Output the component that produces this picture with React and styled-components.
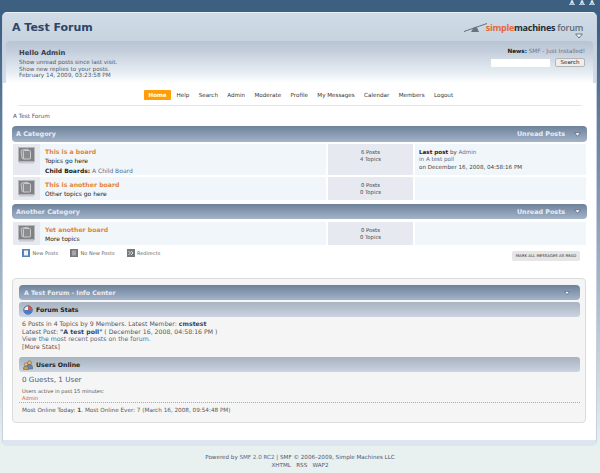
import React from "react";
import styled, { createGlobalStyle } from "styled-components";

const GlobalStyle = createGlobalStyle`
  html, body {
    margin: 0;
    padding: 0;
  }
  body {
    background: #e8f0f0;
    font-family: "DejaVu Sans", Verdana, sans-serif;
    color: #333;
  }
`;

const Page = styled.div`
  width: 600px;
  height: 473px;
  overflow: hidden;
  background: linear-gradient(#3d5f80 0, #3d5f80 30px, #e9f0f0 446px, #e9f0f0 100%);
`;

const TopBar = styled.div`
  height: 12px;
  display: flex;
  justify-content: flex-end;
  gap: 4px;
  padding-right: 5px;
`;

const SizeLetter = styled.span`
  width: 6px;
  text-align: center;
  font-size: 5px;
  line-height: 4px;
  height: 4px;
  font-weight: bold;
  color: #fff;
  border-bottom: 1px solid #b4c8dc;
`;

const Wrapper = styled.div`
  margin: 0 3px 0 2px;
  width: 595px;
  height: 434px;
  box-sizing: border-box;
  background: #fff;
  border-radius: 5px;
  border: 1px solid #c6d0e0;
  border-top-color: #e8eff6;
  border-bottom: 6px solid #dde5f1;
  display: flex;
  flex-direction: column;
`;

const Header = styled.div`
  background: linear-gradient(#cfdbe6 0%, #c6d2de 45%, #d3deec 100%);
  border-radius: 4px 4px 0 0;
  height: 70px;
  flex: none;
  padding-left: 3px;
  padding-right: 3px;
  display: flex;
  flex-direction: column;
`;

const TitleRow = styled.div`
  height: 28px;
  flex: none;
  display: flex;
  align-items: center;
  justify-content: space-between;
  padding: 0 10px 0 6px;
`;

const ForumName = styled.h1`
  margin: 0;
  font-size: 11px;
  font-weight: bold;
  color: #2e4468;
`;

const LogoBox = styled.div`
  display: flex;
  flex-direction: column;
  align-items: flex-end;
  margin-top: 6px;
`;

const Logo = styled.div`
  display: flex;
  align-items: center;
  height: 11px;
  font-family: "Open Sans", sans-serif;
  font-size: 9px;
  font-weight: 700;
  letter-spacing: -0.25px;
  color: #232b38;
  em {
    font-style: normal;
    color: #e5673a;
  }
  b {
    font-weight: 600;
    color: #5f6975;
    margin-left: 2px;
  }
`;

const UserPanel = styled.div`
  flex: 1;
  background: linear-gradient(#b8c3d3 0%, #c5cfdc 25%, #e4ebf2 72%, #fff 100%);
  border-radius: 4px 4px 0 0;
  display: flex;
  justify-content: space-between;
  padding: 7px 8px 0 13px;
`;

const Hello = styled.div`
  font-size: 5.7px;
  line-height: 6.5px;
  color: #4f5a70;
  h2 {
    margin: 0 0 1px;
    font-size: 6.8px;
    line-height: 10px;
    color: #3a4050;
  }
`;

const NewsBox = styled.div`
  display: flex;
  flex-direction: column;
  align-items: flex-end;
  font-size: 5.7px;
  color: #6a7488;
  b {
    color: #222;
  }
`;

const SearchRow = styled.div`
  display: flex;
  gap: 5px;
  margin-top: 4px;
`;

const SearchInput = styled.div`
  width: 59px;
  height: 8px;
  margin-top: 1px;
  background: #fff;
`;

const SearchButton = styled.div`
  width: 28px;
  height: 7px;
  line-height: 7px;
  text-align: center;
  font-size: 5.5px;
  color: #222;
  background: #eee;
  border: 1px solid #b5b5b5;
  border-radius: 2px;
`;

const Menu = styled.nav`
  height: 20px;
  flex: none;
  margin: 0 14px 0 15px;
  padding-top: 2px;
  border-bottom: 1px solid #e6e6e6;
  display: flex;
  align-items: center;
  padding-left: 126px;
  gap: 9.4px;
  font-size: 5.6px;
  color: #333;
`;

const MenuItem = styled.span`
  ${(p) =>
    p.$active &&
    `
    background: #ff9d0a;
    color: #fff;
    font-weight: bold;
    padding: 2px 4.5px;
    border-radius: 1px;
    margin-right: -4px;
  `}
`;

const Crumb = styled.div`
  font-size: 5.7px;
  color: #4a5670;
  padding: 7px 0 0 10px;
  height: 15px;
  flex: none;
  box-sizing: border-box;
`;

const Content = styled.div`
  padding: 5px 9px 0 9px;
`;

const CatBar = styled.div`
  height: ${(p) => p.$h || 16}px;
  margin-top: ${(p) => p.$mt || 0}px;
  background: linear-gradient(#6d8299 0%, #8598b0 45%, #a3b4c9 100%);
  border-radius: 4px;
  display: flex;
  align-items: center;
  justify-content: space-between;
  padding: 0 6px 0 4px;
  font-size: 6.4px;
  font-weight: bold;
  color: #e9eef4;
`;

const Right = styled.div`
  display: flex;
  align-items: center;
  gap: 9px;
`;

const Row = styled.div`
  display: grid;
  grid-template-columns: 27px 286px 2px 85px 2px 171px;
  margin: ${(p) => p.$mt}px 1px 0;
  height: ${(p) => p.$h}px;
`;

const IconCell = styled.div`
  background: #e6e9ef;
  display: flex;
  align-items: flex-start;
  justify-content: center;
  padding-top: 3px;
`;

const InfoCell = styled.div`
  background: #f0f6f9;
  padding: 3px 0 0 5px;
  font-size: 6px;
  line-height: 9.3px;
  color: #222;
`;

const BoardName = styled.div`
  font-size: 6.2px;
  font-weight: bold;
  color: #e3833b;
`;

const Link = styled.span`
  color: #5a6c8a;
`;

const Gap = styled.div`
  background: #fff;
`;

const StatsCell = styled.div`
  background: #e6e9ef;
  font-size: 5.3px;
  line-height: 7.5px;
  color: #444;
  text-align: center;
  padding-top: 4.5px;
`;

const LastCell = styled.div`
  background: #f0f6f9;
  font-size: 5.6px;
  line-height: 7.5px;
  color: #444;
  padding: 4.5px 0 0 4px;
  b {
    color: #222;
  }
`;

const LegendRow = styled.div`
  display: flex;
  justify-content: space-between;
  align-items: flex-start;
  height: 14px;
  margin-top: 1px;
  padding: 0 7px 0 10px;
`;

const Legend = styled.div`
  display: flex;
  align-items: center;
  height: 14px;
  gap: 12px;
  font-size: 5px;
  color: #666;
`;

const LegendItem = styled.span`
  display: flex;
  align-items: center;
  gap: 2.5px;
`;

const MarkButton = styled.div`
  width: 68px;
  height: 10px;
  margin-top: 5px;
  line-height: 10px;
  text-align: center;
  font-size: 3.9px;
  color: #333;
  background: #e6e6e6;
  border-radius: 2px;
  white-space: nowrap;
`;

const InfoCenter = styled.div`
  margin-top: 18px;
  width: 574px;
  height: 145px;
  box-sizing: border-box;
  border: 1px solid #dcdcdc;
  border-radius: 4px;
  background: #f5f5f5;
  padding: 6px 5px 0 6px;
`;

const InfoTitle = styled(CatBar)`
  height: 15px;
  padding-right: 10px;
  font-size: 6.2px;
  padding-left: 5px;
`;

const SubBar = styled.div`
  height: 15px;
  margin-top: ${(p) => p.$mt}px;
  background: linear-gradient(#a9b3c2 0%, #b6c1cd 45%, #cbd5e1 100%);
  border-radius: 3px;
  display: flex;
  align-items: center;
  gap: 3px;
  padding-left: 4px;
  font-size: 6.2px;
  font-weight: bold;
  color: #222;
`;

const StatsText = styled.div`
  font-size: 6.2px;
  line-height: 7.5px;
  color: #555;
  padding: 3px 0 0 3px;
  white-space: nowrap;
  b {
    color: #2e4468;
  }
`;

const OnlineCount = styled.div`
  font-size: 7.2px;
  line-height: 9px;
  color: #4a5f80;
  padding: 3px 0 4px 3px;
`;

const SmallText = styled.div`
  font-size: 5.1px;
  line-height: 7px;
  color: ${(p) => p.$color || "#555"};
  padding-left: 3px;
`;

const Dotted = styled.div`
  border-top: 1px dotted #aaa;
  font-size: 5.7px;
  line-height: 7px;
  color: #555;
  padding: 4px 0 0 3px;
  white-space: nowrap;
`;

const Footer = styled.div`
  text-align: center;
  font-size: 5.6px;
  line-height: 8px;
  color: #4a5670;
  padding-top: 7px;
`;

const Arrow = ({ size = 6 }) => (
  <svg width={size} height={size - 2} viewBox="0 0 6 4">
    <path d="M0.5 0.5H5.5L3 3.5Z" fill="#fff" stroke="#4b5668" strokeWidth="0.6" />
  </svg>
);

const BoardIcon = () => (
  <svg width="17" height="17" viewBox="0 0 17 17">
    <rect x="0.5" y="0.5" width="16" height="14" fill="#7f8184" stroke="#b5b7ba" />
    <rect x="1" y="15" width="15" height="1.5" fill="#c8cad0" />
    <rect x="3.5" y="2.5" width="7.5" height="9" rx="1" fill="#8f9194" stroke="#cfd1d3" strokeWidth="0.8" transform="rotate(-8 8 7)" />
    <rect x="5.5" y="3.5" width="7" height="8.5" rx="1" fill="#8a8c8f" stroke="#d8dadc" strokeWidth="0.8" />
  </svg>
);

const LegendIcon = ({ kind }) => (
  <svg width="8" height="8" viewBox="0 0 8 8">
    <rect width="8" height="8" fill={kind === "new" ? "#5b82b4" : "#77797c"} />
    {kind === "redirect" ? (
      <path d="M1.5 2L3.5 4L1.5 6M4 2L6 4L4 6" fill="none" stroke="#e8e8e8" strokeWidth="0.9" />
    ) : (
      <rect x="2" y="1.5" width="4" height="5" fill={kind === "new" ? "#eef3fa" : "#a5a7aa"} />
    )}
  </svg>
);

const StatsIcon = () => (
  <svg width="10" height="10" viewBox="0 0 10 10">
    <circle cx="5" cy="5" r="4.2" fill="#e8eef8" stroke="#3f5fa8" strokeWidth="1" />
    <path d="M5 5V0.8A4.2 4.2 0 0 1 9.2 5Z" fill="#d65a3a" />
    <path d="M1 5H9A4 4 0 0 1 1 5Z" fill="#4f78c4" />
  </svg>
);

const UsersIcon = () => (
  <svg width="10" height="10" viewBox="0 0 10 10">
    <circle cx="6.5" cy="2.8" r="2" fill="#e4b45c" stroke="#6b5a3a" strokeWidth="0.5" />
    <path d="M3.5 9V7A3 2.5 0 0 1 9.5 7V9Z" fill="#6d86b5" stroke="#4b5668" strokeWidth="0.5" />
    <circle cx="3" cy="4.5" r="1.7" fill="#eac27a" stroke="#6b5a3a" strokeWidth="0.5" />
    <path d="M0.5 9.5V8A2.5 2 0 0 1 5.5 8V9.5Z" fill="#c99a4a" stroke="#4b5668" strokeWidth="0.5" />
  </svg>
);

const SeeSaw = () => (
  <svg width="24" height="11" viewBox="0 0 24 11" style={{ marginRight: -2 }}>
    <path d="M0 9.5L23 1.5" stroke="#5b6572" strokeWidth="0.9" />
    <path d="M7 10L9.5 5.5L12.5 4.5L15 10Z" fill="#6a7480" />
  </svg>
);

const menu = ["Help", "Search", "Admin", "Moderate", "Profile", "My Messages", "Calendar", "Members", "Logout"];

export default function App() {
  return (
    <Page>
      <GlobalStyle />
      <TopBar>
        <SizeLetter>A</SizeLetter>
        <SizeLetter>A</SizeLetter>
        <SizeLetter>A</SizeLetter>
      </TopBar>
      <Wrapper>
        <Header>
          <TitleRow>
            <ForumName>A Test Forum</ForumName>
            <LogoBox>
              <Logo>
                <SeeSaw />
                <em>simple</em>machines<b>forum</b>
              </Logo>
              <Arrow size={8} />
            </LogoBox>
          </TitleRow>
          <UserPanel>
            <Hello>
              <h2>Hello Admin</h2>
              <div>Show unread posts since last visit.</div>
              <div>Show new replies to your posts.</div>
              <div>February 14, 2009, 03:23:58 PM</div>
            </Hello>
            <NewsBox>
              <div>
                <b>News:</b> SMF - Just Installed!
              </div>
              <SearchRow>
                <SearchInput />
                <SearchButton>Search</SearchButton>
              </SearchRow>
            </NewsBox>
          </UserPanel>
        </Header>
        <Menu>
          <MenuItem $active>Home</MenuItem>
          {menu.map((m) => (
            <MenuItem key={m}>{m}</MenuItem>
          ))}
        </Menu>
        <Crumb>A Test Forum</Crumb>
        <Content>
          <CatBar>
            A Category
            <Right>
              Unread Posts <Arrow size={7} />
            </Right>
          </CatBar>
          <Row $h={30} $mt={2}>
            <IconCell>
              <BoardIcon />
            </IconCell>
            <InfoCell>
              <BoardName>This is a board</BoardName>
              <div>Topics go here</div>
              <div>
                <b>Child Boards:</b> <Link>A Child Board</Link>
              </div>
            </InfoCell>
            <Gap />
            <StatsCell>
              6 Posts
              <br />4 Topics
            </StatsCell>
            <Gap />
            <LastCell>
              <b>Last post</b> by <Link>Admin</Link>
              <br />
              <Link>in A test poll</Link>
              <br />
              on December 16, 2008, 04:58:16 PM
            </LastCell>
          </Row>
          <Row $h={23} $mt={3}>
            <IconCell>
              <BoardIcon />
            </IconCell>
            <InfoCell>
              <BoardName>This is another board</BoardName>
              <div>Other topics go here</div>
            </InfoCell>
            <Gap />
            <StatsCell>
              0 Posts
              <br />0 Topics
            </StatsCell>
            <Gap />
            <LastCell />
          </Row>
          <CatBar $h={15} $mt={4}>
            Another Category
            <Right>
              Unread Posts <Arrow size={7} />
            </Right>
          </CatBar>
          <Row $h={23} $mt={3}>
            <IconCell>
              <BoardIcon />
            </IconCell>
            <InfoCell>
              <BoardName>Yet another board</BoardName>
              <div>More topics</div>
            </InfoCell>
            <Gap />
            <StatsCell>
              0 Posts
              <br />0 Topics
            </StatsCell>
            <Gap />
            <LastCell />
          </Row>
          <LegendRow>
            <Legend>
              <LegendItem>
                <LegendIcon kind="new" /> New Posts
              </LegendItem>
              <LegendItem>
                <LegendIcon kind="none" /> No New Posts
              </LegendItem>
              <LegendItem>
                <LegendIcon kind="redirect" /> Redirects
              </LegendItem>
            </Legend>
            <MarkButton>MARK ALL MESSAGES AS READ</MarkButton>
          </LegendRow>
          <InfoCenter>
            <InfoTitle>
              A Test Forum - Info Center
              <Arrow />
            </InfoTitle>
            <SubBar $mt={2}>
              <StatsIcon /> Forum Stats
            </SubBar>
            <StatsText>
              6 Posts in 4 Topics by 9 Members. Latest Member: <b>cmstest</b>
              <br />
              Latest Post: <b>"A test poll"</b> ( December 16, 2008, 04:58:16 PM )
              <br />
              <Link>View the most recent posts on the forum.</Link>
              <br />
              [More Stats]
            </StatsText>
            <SubBar $mt={7}>
              <UsersIcon /> Users Online
            </SubBar>
            <OnlineCount>0 Guests, 1 User</OnlineCount>
            <SmallText>Users active in past 15 minutes:</SmallText>
            <SmallText $color="#e0502a">Admin</SmallText>
            <Dotted>
              Most Online Today: <b>1</b>. Most Online Ever: 7 (March 16, 2008, 09:54:48 PM)
            </Dotted>
          </InfoCenter>
        </Content>
      </Wrapper>
      <Footer>
        Powered by <Link>SMF 2.0 RC2</Link> | SMF © 2006–2009, Simple Machines LLC
        <br />
        XHTML &nbsp; RSS &nbsp; WAP2
      </Footer>
    </Page>
  );
}
